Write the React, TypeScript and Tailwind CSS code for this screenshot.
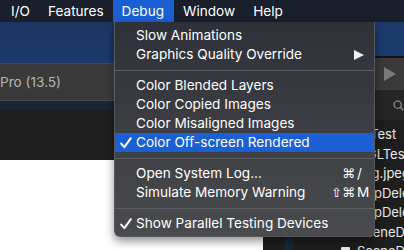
import React from 'react';

type ItemProps = {
  label: string;
  checked?: boolean;
  active?: boolean;
  submenu?: boolean;
  mods?: string;
  keyChar?: string;
};

function Check() {
  return (
    <svg width="12" height="12" viewBox="0 0 12 12" className="absolute left-[5px] top-[4px]">
      <path d="M1.2 6.6 L4.4 10.2 L10.8 1.2" fill="none" stroke="#ffffff" strokeWidth="2" strokeLinecap="round" strokeLinejoin="round" />
    </svg>
  );
}

function Item({ label, checked, active, submenu, mods, keyChar }: ItemProps) {
  return (
    <div className={`relative flex h-[19px] items-center pl-[21px] ${active ? 'bg-[#1b5fd4]' : ''}`}>
      {checked && <Check />}
      <span>{label}</span>
      {submenu && (
        <svg width="10" height="10" viewBox="0 0 10 10" className="absolute left-[239px] top-[5px]">
          <path d="M0 0 L10 5 L0 10 Z" fill="#f2f2f2" />
        </svg>
      )}
      {mods && <span className="absolute left-[200px] w-[40px] text-right font-['DejaVu_Sans',sans-serif] text-[13px] leading-[19px]">{mods}</span>}
      {keyChar && <span className="absolute left-[242px] leading-[19px]">{keyChar}</span>}
    </div>
  );
}

function Sep() {
  return (
    <div className="flex h-[12px] items-center">
      <div className="h-px w-full bg-[#5c5e62]" />
    </div>
  );
}

const files = [
  { name: 'UITest', icon: 'bg-[#6d7fa8]' },
  { name: 'OGLTest', icon: 'bg-[#6d7fa8]' },
  { name: 'img.jpeg', icon: 'bg-[#8a8a8a]' },
  { name: 'AppDelegate', icon: 'bg-[#c4423f]' },
  { name: 'AppDelegate', icon: 'bg-[#5b6ec9]' },
  { name: 'SceneDelegate', icon: 'bg-[#c4423f]' },
  { name: 'SceneDelegate', icon: 'bg-[#e6e6e6]' },
];

export default function App() {
  return (
    <div className="relative h-[250px] w-[404px] overflow-hidden bg-white font-['Inter',Arial,sans-serif] text-[13.6px] text-white">
      {/* menu bar */}
      <div className="flex h-[22px] items-stretch bg-[#1a1f2c] pl-[2px] leading-[22px]">
        <div className="px-[9px]">I/O</div>
        <div className="px-[9px]">Features</div>
        <div className="bg-[#1b5fd4] pl-[9px] pr-[10px]">Debug</div>
        <div className="px-[9px]">Window</div>
        <div className="px-[9px]">Help</div>
      </div>

      {/* upper windows */}
      <div className="flex h-[98px]">
        <div className="flex w-[374px] shrink-0 flex-col">
          <div className="h-[41px] bg-linear-to-b from-[#1c3562] to-[#1b3a6c]" />
          <div className="flex h-[38px] items-center border-y border-[#4b4b4b] bg-[#383838]">
            <div className="flex h-full w-[114px] items-center border-r border-[#4b4b4b] bg-[#3a3a3a] text-[#b4b4b4]">Pro (13.5)</div>
          </div>
          <div className="h-[9px] bg-[#1a2536]" />
          <div className="flex-1 bg-[#1e1e1e]" />
        </div>
        <div className="flex min-w-0 flex-1 flex-col border-l border-[#3a3a3a]">
          <div className="h-[34px] bg-[#1b3a6c]" />
          <div className="h-[2px] bg-[#151515]" />
          <div className="flex h-[32px] items-center bg-[#3a3a3a] pl-[9px]">
            <svg width="12" height="14" viewBox="0 0 12 14">
              <path d="M0 0 L12 7 L0 14 Z" fill="#7b7b7b" />
            </svg>
          </div>
          <div className="flex flex-1 items-center bg-[#252525] pl-[18px]">
            <svg width="13" height="13" viewBox="0 0 13 13">
              <circle cx="5.5" cy="5.5" r="4.3" fill="none" stroke="#9d9d9d" strokeWidth="1.3" />
              <path d="M8.6 8.6 L12.3 12.3" stroke="#9d9d9d" strokeWidth="1.4" />
            </svg>
          </div>
        </div>
      </div>

      {/* lower area */}
      <div className="flex h-[130px]">
        <div className="flex w-[263px] shrink-0 flex-col">
          <div className="h-[40px] bg-[#1e1e1e]" />
          <div className="flex-1 bg-white" />
        </div>
        <div className="flex min-w-0 flex-1 overflow-hidden bg-[#1e1e1e]">
          <div className="ml-[22px] w-[8px] shrink-0 bg-[#14283a]" />
          <div className="flex flex-col pt-[5px] text-[13px] text-[#e8e8e8]">
            {files.map((f, i) => (
              <div key={i} className="flex h-[20px] items-center gap-[7px] whitespace-nowrap pl-[48px]">
                <div className={`h-[10px] w-[9px] shrink-0 rounded-[1px] ${f.icon}`} />
                <span>{f.name}</span>
              </div>
            ))}
          </div>
        </div>
      </div>

      {/* Debug menu */}
      <div className="absolute left-[114px] top-[22px] h-[215px] w-[261px] rounded-b-[6px] border-x border-b border-[#56585c] bg-linear-to-b from-[#2e3139] via-[#3c3e43] to-[#4a4b4e] pt-[4px] shadow-[0_4px_10px_rgba(0,0,0,0.45)]">
        <Item label="Slow Animations" />
        <Item label="Graphics Quality Override" submenu />
        <Sep />
        <Item label="Color Blended Layers" />
        <Item label="Color Copied Images" />
        <Item label="Color Misaligned Images" />
        <Item label="Color Off-screen Rendered" checked active />
        <Sep />
        <Item label="Open System Log..." mods="⌘" keyChar="/" />
        <Item label="Simulate Memory Warning" mods="⇧⌘" keyChar="M" />
        <Sep />
        <Item label="Show Parallel Testing Devices" checked />
      </div>
    </div>
  );
}
